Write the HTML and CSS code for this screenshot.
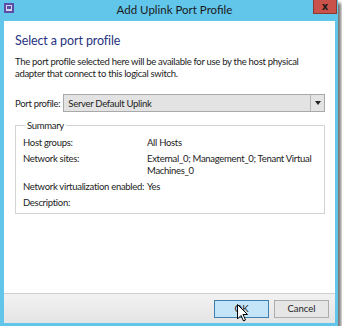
FILE: index.html
```html
<!DOCTYPE html>
<html lang="en">
<head>
    <meta charset="UTF-8">
    <title>Add Uplink Port Profile</title>
    <link rel="stylesheet" href="styles.css">
</head>
<body>
<div class="window">
    <div class="titlebar">
        <svg class="app-icon" width="10" height="10" viewBox="0 0 10 10">
            <rect x="0" y="0" width="10" height="10" fill="#5a4fa8"/>
            <rect x="2" y="2" width="6" height="6" fill="#d8d4f0"/>
            <rect x="3" y="3" width="4" height="3" fill="#5a4fa8"/>
        </svg>
        <span class="title">Add Uplink Port Profile</span>
        <button type="button" class="close">x</button>
    </div>
    <div class="client">
        <div class="content">
            <h1>Select a port profile</h1>
            <p class="intro">The port profile selected here will be available for use by the host physical<br>adapter that connect to this logical switch.</p>

            <div class="field">
                <label for="profile">Port profile:</label>
                <div class="combo" id="profile">
                    <span class="combo-value">Server Default Uplink</span>
                    <span class="combo-arrow">
                        <svg width="6" height="4" viewBox="0 0 6 4"><path d="M0 0H6L3 4Z" fill="#222"/></svg>
                    </span>
                </div>
            </div>

            <fieldset class="summary">
                <legend>Summary</legend>
                <div class="summary-grid">
                    <span>Host groups:</span>
                    <span>All Hosts</span>
                    <span>Network sites:</span>
                    <span>External_0; Management_0; Tenant Virtual<br>Machines_0</span>
                    <span>Network virtualization enabled:</span>
                    <span>Yes</span>
                    <span>Description:</span>
                    <span></span>
                </div>
            </fieldset>
        </div>
        <div class="footer">
            <button type="button" class="btn btn-ok">OK</button>
            <button type="button" class="btn">Cancel</button>
            <svg class="cursor" width="11" height="18" viewBox="0 0 11 18">
                <path d="M0.5 0.5V15L4 11.5L6.5 17L8.5 16L6 10.5H10.5Z" fill="#fff" stroke="#000" stroke-width="1"/>
            </svg>
        </div>
    </div>
</div>
</body>
</html>
```

FILE: styles.css
```css
body {
    margin: 0;
    background-color: #ffffff;
    font-family: Lato, "Noto Sans", sans-serif;
    font-size: 9.5px;
    letter-spacing: -0.3px;
    color: #222;
}
.window {
    width: 338px;
    height: 326px;
    box-sizing: border-box;
    background-color: #62c5ea;
    padding: 0 3px 3px 4px;
    display: flex;
    flex-direction: column;
    box-shadow: 3px 3px 3px rgba(0, 0, 0, 0.55);
}
.titlebar {
    height: 21px;
    display: flex;
    align-items: center;
    position: relative;
}
.app-icon {
    margin-top: -5px;
}
.title {
    flex: 1;
    text-align: center;
    font-size: 11.5px;
    letter-spacing: 0;
    color: #1a1a1a;
    margin-top: -2px;
}
.close {
    position: absolute;
    right: -2px;
    top: 0;
    width: 24px;
    height: 14px;
    padding: 0;
    border: 1px solid #8a3a30;
    border-top: none;
    background-color: #c9534a;
    color: #1a1a1a;
    font-family: "DejaVu Sans", sans-serif;
    font-weight: bold;
    font-size: 10px;
    line-height: 11px;
}
.client {
    flex: 1;
    background-color: #ffffff;
    display: flex;
    flex-direction: column;
}
.content {
    flex: 1;
    padding: 0 10px 0 11px;
}
h1 {
    margin: 12px 0 0;
    font-size: 12.5px;
    letter-spacing: -0.1px;
    font-weight: normal;
    color: #27337e;
}
.intro {
    margin: 8px 0 0;
    line-height: 12px;
    white-space: nowrap;
}
.field {
    display: flex;
    align-items: center;
    margin-top: 14px;
}
.field label {
    margin-right: 3px;
}
.combo {
    flex: 1;
    height: 18px;
    box-sizing: border-box;
    border: 1px solid #a9a9a9;
    background-color: #e3e3e3;
    display: flex;
    align-items: center;
}
.combo-value {
    flex: 1;
    padding-left: 4px;
}
.combo-arrow {
    width: 13px;
    height: 16px;
    border-left: 1px solid #b5b5b5;
    display: flex;
    align-items: center;
    justify-content: center;
}
.summary {
    margin: 8px 0 0;
    padding: 6px 7px 14px;
    border: 1px solid #d4d4d4;
    height: 94px;
    box-sizing: border-box;
}
.summary legend {
    padding: 0 2px;
    margin-left: 2px;
}
.summary-grid {
    display: grid;
    grid-template-columns: 124px 1fr;
    row-gap: 4px;
    line-height: 12px;
    white-space: nowrap;
}
.footer {
    height: 30px;
    box-sizing: border-box;
    border-top: 1px solid #cfcfcf;
    background: linear-gradient(#f2f2f2, #e4e4e4);
    display: flex;
    justify-content: flex-end;
    align-items: center;
    gap: 5px;
    padding-right: 6px;
    position: relative;
}
.btn {
    width: 55px;
    height: 18px;
    padding: 0;
    border: 1px solid #acacac;
    background-color: #e6e6e6;
    font-family: Lato, "Noto Sans", sans-serif;
    font-size: 9.5px;
    color: #222;
}
.btn-ok {
    background-color: #c4e5f8;
    border-color: #3c7fb1;
}
.cursor {
    position: absolute;
    left: 233px;
    top: 10px;
}
```
